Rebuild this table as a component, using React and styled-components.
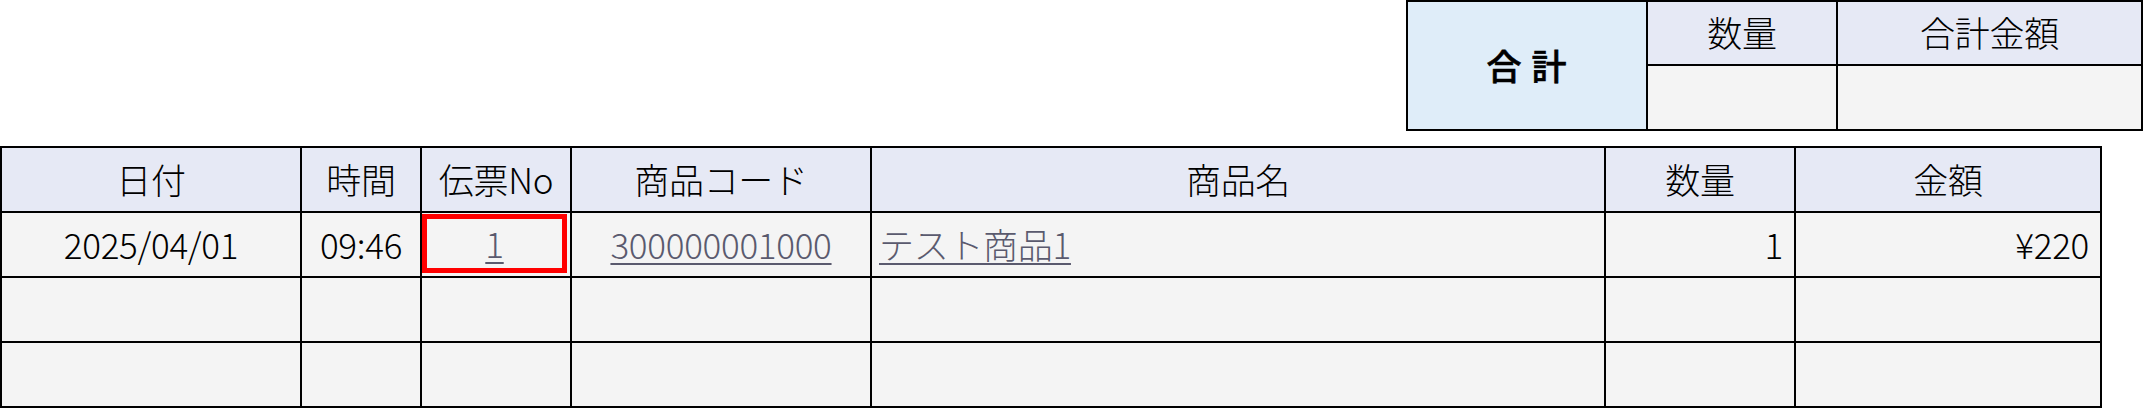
import React from "react";
import styled, { createGlobalStyle } from "styled-components";

const GlobalStyle = createGlobalStyle`
  html, body {
    margin: 0;
    padding: 0;
    background: #ffffff;
  }
  body {
    font-family: "Noto Sans CJK JP", "Liberation Sans", sans-serif;
    color: #000000;
  }
`;

const Page = styled.div`
  width: 2144px;
  height: 408px;
  display: flex;
  flex-direction: column;
  align-items: flex-start;
  overflow: hidden;
`;

const TotalsRow = styled.div`
  align-self: flex-end;
  margin-right: 1px;
  margin-bottom: 15px;
`;

// 罫線は背景の黒 + gap で描く
const Grid = styled.div`
  display: grid;
  grid-template-columns: ${(props) => props.$cols};
  grid-auto-rows: ${(props) => props.$rows || "63px"};
  gap: 2px;
  padding: 2px;
  background: #000000;
  font-size: 35px;
  font-weight: 300;
  line-height: 1;
  letter-spacing: -0.3px;
`;

const Cell = styled.div`
  display: flex;
  align-items: center;
  justify-content: ${(props) =>
    props.$align === "left"
      ? "flex-start"
      : props.$align === "right"
      ? "flex-end"
      : "center"};
  padding: ${(props) =>
    props.$align === "left"
      ? "0 0 3px 7px"
      : props.$align === "right"
      ? "0 11px 3px 0"
      : "0 0 3px 0"};
  background: #f4f4f4;
  white-space: nowrap;
  overflow: hidden;
  box-sizing: border-box;
`;

const HeadCell = styled(Cell)`
  background: #e6e9f5;
`;

const TotalLabel = styled(Cell)`
  grid-row: span 2;
  background: #dfedf9;
  font-weight: 500;
  font-size: 35px;
  letter-spacing: 1px;
  -webkit-text-stroke: 0.6px #000000;
`;

const SlipCell = styled(Cell)`
  padding: 1px 3px 3px 0;
  align-items: stretch;
`;

const SlipBox = styled.div`
  flex: 1;
  display: flex;
  align-items: center;
  justify-content: center;
  padding-bottom: 2px;
  border: 5px solid #ff0000;
  box-sizing: border-box;
`;

const LinkText = styled.a`
  color: #5a5a6e;
  text-decoration: underline;
  text-decoration-thickness: 2px;
  text-underline-offset: 4px;
  cursor: pointer;
`;

const mainCols = "298px 118px 148px 298px 732px 188px 304px";

const rows = [
  {
    date: "2025/04/01",
    time: "09:46",
    slip: "1",
    code: "300000001000",
    name: "テスト商品1",
    qty: "1",
    amount: "¥220",
  },
  null,
  null,
];

export default function App() {
  return (
    <>
      <GlobalStyle />
      <Page>
        <TotalsRow>
          <Grid $cols="238px 188px 303px" $rows="62px 63px">
            <TotalLabel>合 計</TotalLabel>
            <HeadCell>数量</HeadCell>
            <HeadCell>合計金額</HeadCell>
            <Cell />
            <Cell />
          </Grid>
        </TotalsRow>

        <Grid $cols={mainCols}>
          <HeadCell>日付</HeadCell>
          <HeadCell>時間</HeadCell>
          <HeadCell>伝票No</HeadCell>
          <HeadCell>商品コード</HeadCell>
          <HeadCell>商品名</HeadCell>
          <HeadCell>数量</HeadCell>
          <HeadCell>金額</HeadCell>

          {rows.map((row, idx) =>
            row ? (
              <React.Fragment key={idx}>
                <Cell>{row.date}</Cell>
                <Cell>{row.time}</Cell>
                <SlipCell>
                  <SlipBox>
                    <LinkText>{row.slip}</LinkText>
                  </SlipBox>
                </SlipCell>
                <Cell>
                  <LinkText>{row.code}</LinkText>
                </Cell>
                <Cell $align="left">
                  <LinkText>{row.name}</LinkText>
                </Cell>
                <Cell $align="right">{row.qty}</Cell>
                <Cell $align="right">{row.amount}</Cell>
              </React.Fragment>
            ) : (
              <React.Fragment key={idx}>
                <Cell />
                <Cell />
                <Cell />
                <Cell />
                <Cell />
                <Cell />
                <Cell />
              </React.Fragment>
            )
          )}
        </Grid>
      </Page>
    </>
  );
}
